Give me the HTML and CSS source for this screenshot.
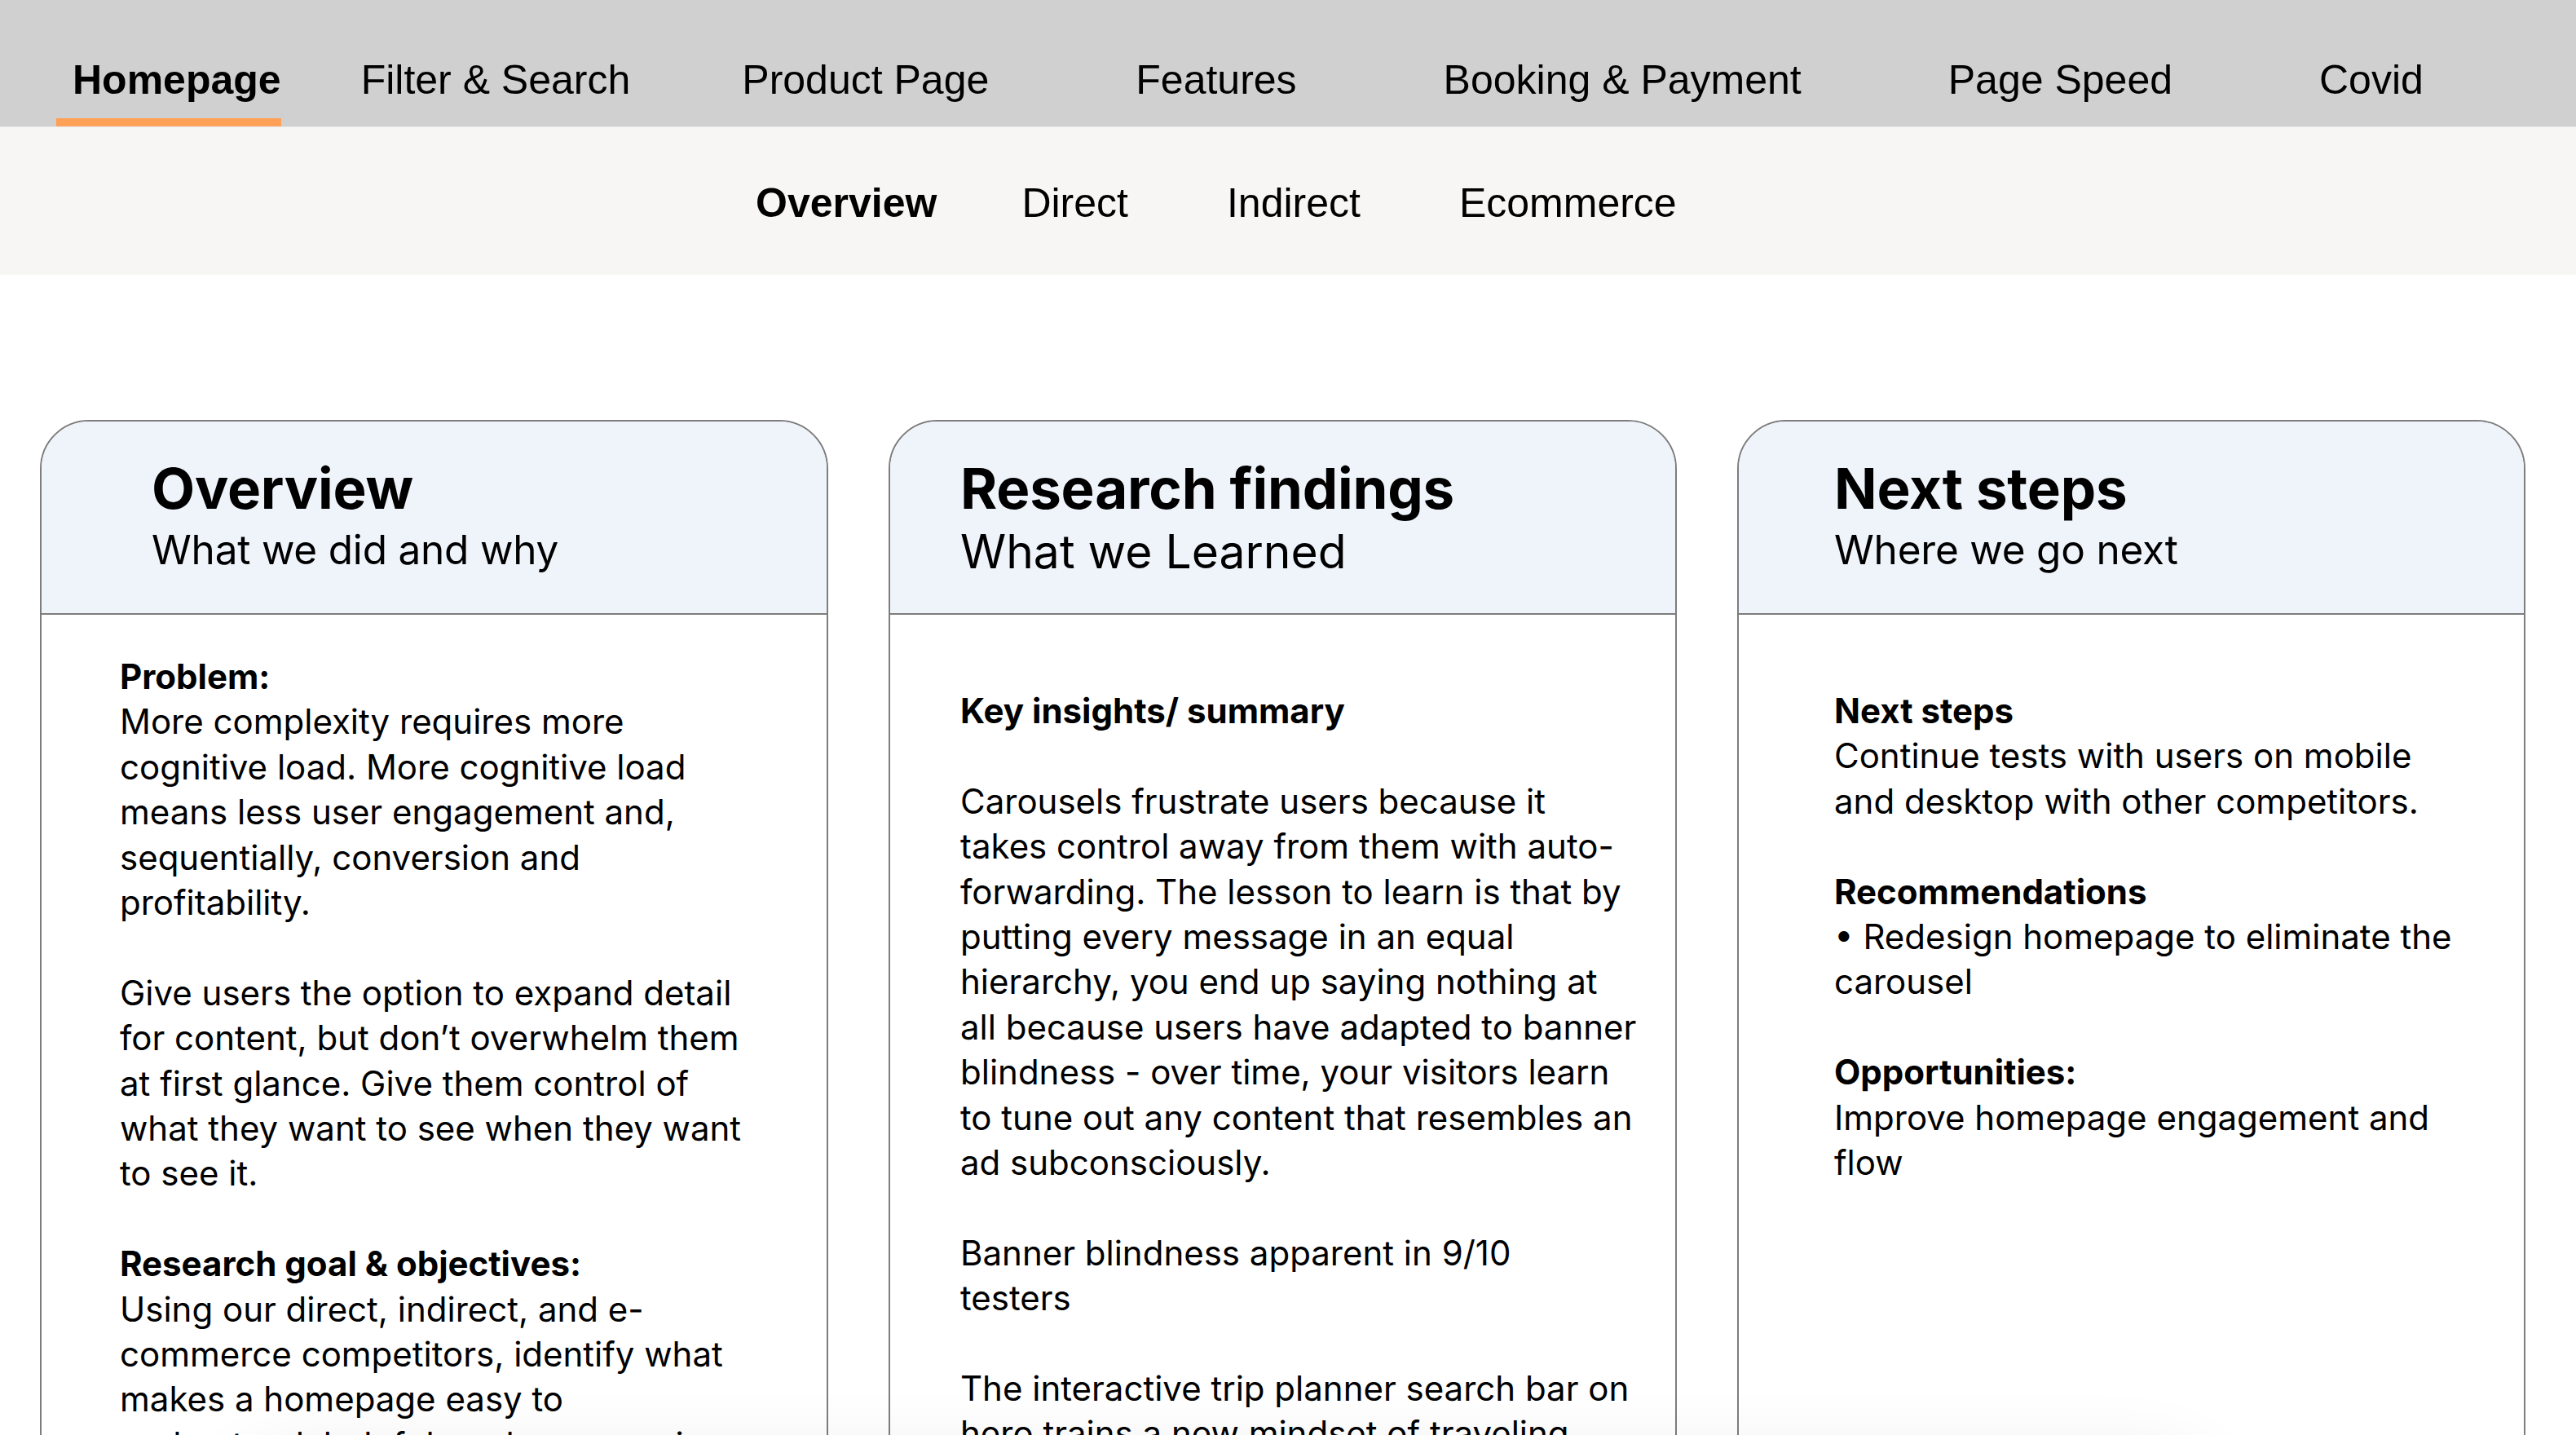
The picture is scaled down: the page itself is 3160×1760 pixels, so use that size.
FILE: index.html
```html
<!DOCTYPE html>
<html lang="en">
<head>
<meta charset="utf-8">
<title>Homepage research overview</title>
<link rel="stylesheet" href="styles.css">
</head>
<body>
<nav class="topnav">
  <a class="tab tab--first tab--active">Homepage</a>
  <a class="tab tab--second">Filter &amp; Search</a>
  <a class="tab tab--third">Product Page</a>
  <a class="tab">Features</a>
  <a class="tab">Booking &amp; Payment</a>
  <a class="tab">Page Speed</a>
  <a class="tab">Covid</a>
</nav>
<nav class="subnav">
  <a class="sub sub--active">Overview</a>
  <a class="sub sub--direct">Direct</a>
  <a class="sub">Indirect</a>
  <a class="sub">Ecommerce</a>
</nav>
<main class="cards">
  <section class="card card--overview">
    <header class="card__head">
      <h2 class="card__title">Overview</h2>
      <p class="card__sub">What we did and why</p>
    </header>
    <div class="card__body">
      <p class="para"><b>Problem:</b><br>More complexity requires more<br>cognitive load. More cognitive load<br>means less user engagement and,<br>sequentially, conversion and<br>profitability.</p>
      <p class="para">Give users the option to expand detail<br>for content, but don’t overwhelm them<br>at first glance. Give them control of<br>what they want to see when they want<br>to see it.</p>
      <p class="para"><b>Research goal &amp; objectives:</b><br>Using our direct, indirect, and e-<br>commerce competitors, identify what<br>makes a homepage easy to<br>understand, helpful, and empowering<br>for our users.</p>
    </div>
  </section>
  <section class="card card--findings">
    <header class="card__head">
      <h2 class="card__title">Research findings</h2>
      <p class="card__sub card__sub--large">What we Learned</p>
    </header>
    <div class="card__body">
      <p class="para"><b>Key insights/ summary</b></p>
      <p class="para">Carousels frustrate users because it<br>takes control away from them with auto-<br>forwarding. The lesson to learn is that by<br>putting every message in an equal<br>hierarchy, you end up saying nothing at<br>all because users have adapted to banner<br>blindness - over time, your visitors learn<br>to tune out any content that resembles an<br>ad subconsciously.</p>
      <p class="para">Banner blindness apparent in 9/10<br>testers</p>
      <p class="para">The interactive trip planner search bar on<br>hero trains a new mindset of traveling<br>and planning for users.</p>
    </div>
  </section>
  <section class="card card--next">
    <header class="card__head">
      <h2 class="card__title">Next steps</h2>
      <p class="card__sub">Where we go next</p>
    </header>
    <div class="card__body">
      <p class="para"><b>Next steps</b><br>Continue tests with users on mobile<br>and desktop with other competitors.</p>
      <p class="para"><b>Recommendations</b><br>• Redesign homepage to eliminate the<br>carousel</p>
      <p class="para"><b>Opportunities:</b><br>Improve homepage engagement and<br>flow</p>
    </div>
  </section>
</main>
<div class="dock-shadow"></div>
</body>
</html>
```

FILE: styles.css
```css
html, body {
  margin: 0;
  padding: 0;
  width: 3160px;
  height: 1760px;
  overflow: hidden;
  background: #ffffff;
  color: #000000;
}

body {
  font-family: "Liberation Sans", Arial, sans-serif;
}

a {
  color: inherit;
  text-decoration: none;
}

/* ---------- top navigation ---------- */
.topnav {
  display: flex;
  align-items: flex-end;
  height: 155px;
  background: #d0d0d0;
  border-bottom: 1px solid #e6e6e6;
  box-sizing: content-box;
}

.tab {
  font-size: 50px;
  line-height: 60px;
  padding-bottom: 17px;
  border-bottom: 10px solid transparent;
  margin-left: 180px;
  white-space: nowrap;
}

.tab--first {
  margin-left: 69px;
  padding-left: 20px;
}

.tab--second {
  margin-left: 98px;
}

.tab--third {
  margin-left: 137px;
}

.tab--active {
  font-weight: 700;
  border-bottom-color: #ffa057;
}

/* ---------- sub navigation ---------- */
.subnav {
  display: flex;
  height: 181px;
  box-sizing: border-box;
  padding: 63px 0 0 927px;
  background: #f7f6f4;
}

.sub {
  font-size: 50px;
  line-height: 60px;
  margin-left: 121px;
  white-space: nowrap;
}

.sub--active {
  margin-left: 0;
  font-weight: 700;
}

.sub--direct {
  margin-left: 104px;
}

/* ---------- cards ---------- */
.cards {
  display: flex;
  gap: 74px;
  padding: 178px 0 0 49px;
  font-family: Inter, "Noto Sans", sans-serif;
}

.card {
  width: 967px;
  height: 1500px;
  flex: none;
  box-sizing: border-box;
  border: 2px solid #7d7d7d;
  border-radius: 60px 60px 0 0;
  overflow: hidden;
  background: #ffffff;
}

.card__head {
  height: 237px;
  box-sizing: border-box;
  padding-top: 41px;
  background: #eff4fb;
  border-bottom: 2px solid #7d7d7d;
}

.card__title {
  margin: 0;
  font-size: 69px;
  line-height: 82px;
  font-weight: 700;
  letter-spacing: -0.2px;
}

.card__sub {
  margin: 5px 0 0;
  font-size: 49.5px;
  line-height: 58px;
  font-weight: 400;
  letter-spacing: -0.2px;
}

.card__sub--large {
  font-size: 57px;
  line-height: 62px;
  margin-top: 6px;
  letter-spacing: 0;
}

.card__body {
  font-size: 42px;
  line-height: 55.4px;
  white-space: nowrap;
}

.para {
  margin: 0 0 55.4px;
}

.para b {
  font-weight: 700;
}

.card--overview .card__head {
  padding-left: 135px;
}

.card--overview .card__body {
  padding: 48px 0 0 96px;
}

.card--findings .card__head,
.card--findings .card__body {
  padding-left: 86px;
}

.card--next .card__head,
.card--next .card__body {
  padding-left: 117px;
}

.card--findings .card__body,
.card--next .card__body {
  padding-top: 90px;
}

/* soft shadow cast by a floating bar just below the viewport */
.dock-shadow {
  position: fixed;
  left: 300px;
  right: 460px;
  top: 1800px;
  height: 120px;
  border-radius: 60px;
  background: #ffffff;
  box-shadow: 0 0 90px 10px rgba(0, 0, 0, 0.10);
}
```
